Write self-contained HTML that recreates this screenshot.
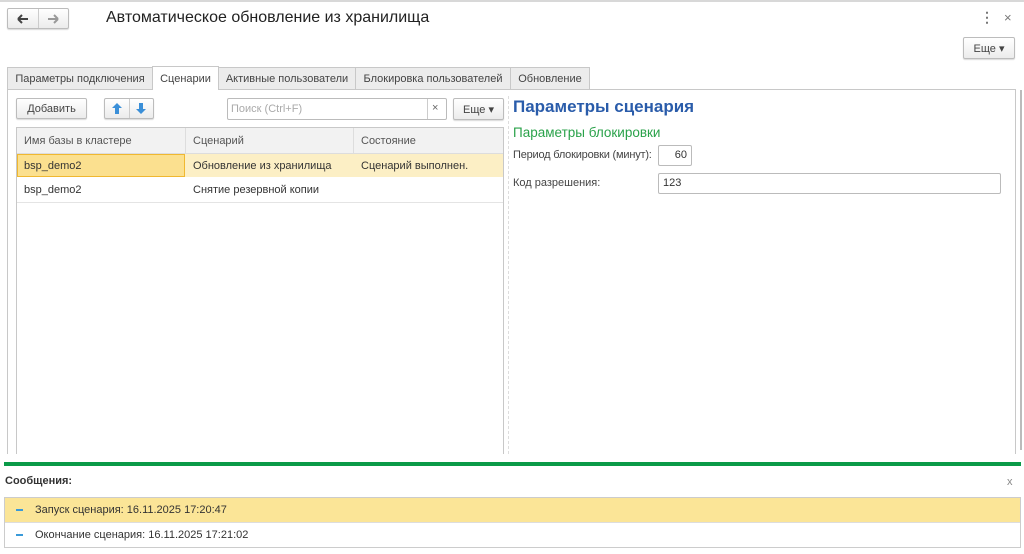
<!DOCTYPE html>
<html><head><meta charset="utf-8"><style>
*{box-sizing:border-box;margin:0;padding:0}
body{width:1024px;height:554px;background:#fff;position:relative;overflow:hidden;font-family:"Liberation Sans",sans-serif;font-size:11px;color:#333}
.a{position:absolute}
.btn{position:absolute;border:1px solid #bcbcbc;border-radius:2px;background:linear-gradient(#fff,#ececec);box-shadow:0 1px 1px rgba(0,0,0,.15);display:flex;align-items:center;justify-content:center;color:#444;font-size:11px}
.tab{position:absolute;top:67px;height:22px;border:1px solid #c8c8c8;border-bottom:none;background:#ececec;color:#444;font-size:11px;display:flex;align-items:center;justify-content:center}
.cell{position:absolute;display:flex;align-items:center;padding-left:8px;font-size:11px}
</style></head><body>
<div class="a" style="left:0;top:0;width:1024px;height:2px;background:#d8d8d8"></div>
<div class="btn" style="left:7px;top:8px;width:62px;height:21px;justify-content:flex-start">
 <span style="width:30px;display:flex;justify-content:center"><svg width="12" height="10" viewBox="0 0 12 10"><path d="M1 5H11M1 5L5 1M1 5L5 9" stroke="#444" stroke-width="2" fill="none"/></svg></span><span style="width:1px;height:19px;background:#ccc"></span><span style="width:30px;display:flex;justify-content:center"><svg width="12" height="10" viewBox="0 0 12 10"><path d="M1 5H11M11 5L7 1M11 5L7 9" stroke="#999" stroke-width="2" fill="none"/></svg></span></div>
<div class="a" style="left:106px;top:9px;font-size:16px;color:#222">Автоматическое обновление из хранилища</div>
<div class="a" style="left:980px;top:9px;font-size:14px;color:#777;font-weight:bold">⋮</div>
<div class="a" style="left:1004px;top:10px;font-size:13px;color:#777">×</div>
<div class="btn" style="left:963px;top:37px;width:52px;height:22px">Еще ▾</div>

<div class="tab" style="left:7px;width:146px">Параметры подключения</div>
<div class="tab" style="left:152px;width:67px;top:66px;height:24px;background:#fff;z-index:2">Сценарии</div>
<div class="tab" style="left:218px;width:138px">Активные пользователи</div>
<div class="tab" style="left:355px;width:156px">Блокировка пользователей</div>
<div class="tab" style="left:510px;width:80px">Обновление</div>
<div class="a" style="left:7px;top:89px;width:1009px;height:365px;border:1px solid #c8c8c8;border-bottom:none"></div>
<div class="a" style="left:1020px;top:90px;width:2px;height:360px;background:#bbb"></div>

<div class="btn" style="left:16px;top:98px;width:71px;height:21px">Добавить</div>
<div class="btn" style="left:104px;top:98px;width:50px;height:21px;justify-content:flex-start">
 <span style="width:25px;display:flex;justify-content:center"><svg width="10" height="11" viewBox="0 0 10 11"><path d="M5 0L10 5H7V11H3V5H0Z" fill="#3a8fd8"/></svg></span><span style="width:1px;height:19px;background:#ccc"></span><span style="width:24px;display:flex;justify-content:center"><svg width="10" height="11" viewBox="0 0 10 11"><path d="M5 11L10 6H7V0H3V6H0Z" fill="#3a8fd8"/></svg></span></div>
<div class="a" style="left:227px;top:98px;width:220px;height:22px;border:1px solid #bbb;border-radius:2px;color:#aaa;font-size:11px;padding:4px 3px">Поиск (Ctrl+F)</div>
<div class="a" style="left:427px;top:99px;width:1px;height:20px;background:#ccc"></div>
<div class="a" style="left:432px;top:102px;font-size:11px;color:#666">×</div>
<div class="btn" style="left:453px;top:98px;width:51px;height:22px">Еще ▾</div>

<div class="a" style="left:16px;top:127px;width:488px;height:327px;border:1px solid #c8c8c8;border-bottom:none"></div>
<div class="a" style="left:17px;top:128px;width:486px;height:26px;background:#f2f2f2;border-bottom:1px solid #ddd"></div>
<div class="a" style="left:185px;top:128px;width:1px;height:26px;background:#ddd"></div>
<div class="a" style="left:353px;top:128px;width:1px;height:26px;background:#ddd"></div>
<div class="cell" style="left:16px;top:128px;height:26px;color:#555">Имя базы в кластере</div>
<div class="cell" style="left:185px;top:128px;height:26px;color:#555">Сценарий</div>
<div class="cell" style="left:353px;top:128px;height:26px;color:#555">Состояние</div>
<div class="a" style="left:17px;top:154px;width:486px;height:23px;background:#fcefc5"></div>
<div class="a" style="left:17px;top:154px;width:168px;height:23px;background:#fbe08f;border:1px solid #f0b830"></div>
<div class="cell" style="left:16px;top:154px;height:23px">bsp_demo2</div>
<div class="cell" style="left:185px;top:154px;height:23px">Обновление из хранилища</div>
<div class="cell" style="left:353px;top:154px;height:23px">Сценарий выполнен.</div>
<div class="cell" style="left:16px;top:177px;height:25px">bsp_demo2</div>
<div class="cell" style="left:185px;top:177px;height:25px">Снятие резервной копии</div>
<div class="a" style="left:17px;top:202px;width:486px;height:1px;background:#e4e4e4"></div>

<div class="a" style="left:508px;top:96px;width:0;height:358px;border-left:1px dashed #ddd"></div>
<div class="a" style="left:513px;top:97px;font-size:17px;font-weight:bold;color:#2a5caa">Параметры сценария</div>
<div class="a" style="left:513px;top:125px;font-size:13.5px;color:#2aa24a">Параметры блокировки</div>
<div class="a" style="left:513px;top:149px;font-size:11px;color:#444;letter-spacing:-0.2px">Период блокировки (минут):</div>
<div class="a" style="left:658px;top:145px;width:34px;height:21px;border:1px solid #bbb;border-radius:2px;text-align:right;padding:3px 4px;font-size:11px">60</div>
<div class="a" style="left:513px;top:177px;font-size:11px;color:#444">Код разрешения:</div>
<div class="a" style="left:658px;top:173px;width:343px;height:21px;border:1px solid #bbb;border-radius:2px;padding:3px 4px;font-size:11px">123</div>

<div class="a" style="left:4px;top:462px;width:1017px;height:4px;background:#0a9a48"></div>
<div class="a" style="left:5px;top:475px;font-size:11px;font-weight:bold;color:#333">Сообщения:</div>
<div class="a" style="left:1007px;top:476px;font-size:11px;color:#888">x</div>
<div class="a" style="left:4px;top:497px;width:1017px;height:51px;border:1px solid #ccc"></div>
<div class="a" style="left:5px;top:498px;width:1015px;height:24px;background:#fbe597"></div>
<div class="a" style="left:5px;top:522px;width:1015px;height:1px;background:#ddd"></div>
<div class="a" style="left:16px;top:509px;width:7px;height:2px;background:#3a9ad9"></div>
<div class="a" style="left:35px;top:504px;font-size:11px">Запуск сценария: 16.11.2025 17:20:47</div>
<div class="a" style="left:16px;top:534px;width:7px;height:2px;background:#3a9ad9"></div>
<div class="a" style="left:35px;top:529px;font-size:11px">Окончание сценария: 16.11.2025 17:21:02</div>
</body></html>
